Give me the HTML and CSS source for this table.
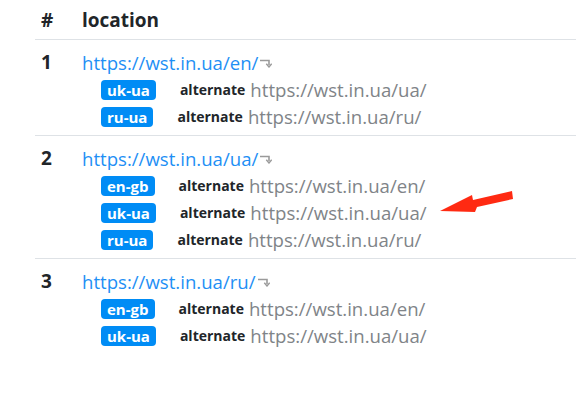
FILE: index.html
```html
<!DOCTYPE html>
<html>
<head>
<meta charset="utf-8">
<link rel="stylesheet" href="styles.css">
</head>
<body>
<div class="table">
  <div class="head">
    <div class="num">#</div>
    <div class="loc">location</div>
  </div>
  <div class="row">
    <div class="num">1</div>
    <div class="loc">
      <div class="main"><a class="link">https://wst.in.ua/en/</a><svg class="ret" width="12" height="10" viewBox="0 0 12 10"><path d="M0 2.5H9V7" fill="none" stroke="#9a9a9a" stroke-width="1.6"/><path d="M6.3 5.8L9 9L11.7 5.8" fill="none" stroke="#9a9a9a" stroke-width="1.4"/></svg></div>
      <div class="alt"><span class="badge">uk-ua</span><b class="rel">alternate</b><span class="url">https://wst.in.ua/ua/</span></div>
      <div class="alt"><span class="badge">ru-ua</span><b class="rel">alternate</b><span class="url">https://wst.in.ua/ru/</span></div>
    </div>
  </div>
  <div class="row">
    <div class="num">2</div>
    <div class="loc">
      <div class="main"><a class="link">https://wst.in.ua/ua/</a><svg class="ret" width="12" height="10" viewBox="0 0 12 10"><path d="M0 2.5H9V7" fill="none" stroke="#9a9a9a" stroke-width="1.6"/><path d="M6.3 5.8L9 9L11.7 5.8" fill="none" stroke="#9a9a9a" stroke-width="1.4"/></svg></div>
      <div class="alt"><span class="badge">en-gb</span><b class="rel">alternate</b><span class="url">https://wst.in.ua/en/</span></div>
      <div class="alt"><span class="badge">uk-ua</span><b class="rel">alternate</b><span class="url">https://wst.in.ua/ua/</span></div>
      <div class="alt"><span class="badge">ru-ua</span><b class="rel">alternate</b><span class="url">https://wst.in.ua/ru/</span></div>
    </div>
  </div>
  <div class="row last">
    <div class="num">3</div>
    <div class="loc">
      <div class="main"><a class="link">https://wst.in.ua/ru/</a><svg class="ret" width="12" height="10" viewBox="0 0 12 10"><path d="M0 2.5H9V7" fill="none" stroke="#9a9a9a" stroke-width="1.6"/><path d="M6.3 5.8L9 9L11.7 5.8" fill="none" stroke="#9a9a9a" stroke-width="1.4"/></svg></div>
      <div class="alt"><span class="badge">en-gb</span><b class="rel">alternate</b><span class="url">https://wst.in.ua/en/</span></div>
      <div class="alt"><span class="badge">uk-ua</span><b class="rel">alternate</b><span class="url">https://wst.in.ua/ua/</span></div>
    </div>
  </div>
</div>
<svg class="arrow" width="80" height="24" viewBox="0 0 80 24"><polygon points="72,0 73,8 37,16 35,21 0,20 32,4 33,9" fill="#ff2a12"/></svg>
</body>
</html>
```
FILE: styles.css
```css
html, body {
  margin: 0;
  padding: 0;
  background: #fff;
}
body {
  font-family: "Open Sans", "Noto Sans", sans-serif;
  color: #212529;
  position: relative;
  width: 576px;
  height: 409px;
  overflow: hidden;
}
.table {
  margin-left: 35px;
}
.head, .row {
  display: flex;
  border-bottom: 1px solid #dee2e6;
}
.row.last {
  border-bottom: none;
}
.head {
  height: 39px;
  align-items: center;
  font-weight: 700;
  font-size: 19px;
}
.num {
  width: 47px;
  padding-left: 6px;
  box-sizing: border-box;
  font-weight: 700;
  font-size: 19px;
  line-height: 28px;
}
.head .num, .head .loc {
  line-height: 28px;
}
.row {
  padding: 8px 0 5px;
}
.main {
  height: 28px;
  display: flex;
  align-items: center;
}
.link {
  color: #1e8ff5;
  font-size: 18.6px;
}
.ret {
  margin-left: 2px;
  margin-top: 2px;
}
.alt {
  height: 27px;
  display: flex;
  align-items: center;
  padding-left: 19px;
}
.badge {
  background: #008cf5;
  color: #fff;
  font-weight: 700;
  font-size: 15px;
  line-height: 20px;
  padding: 0 6px;
  border-radius: 4px;
}
.rel {
  margin-left: 24px;
  font-size: 14px;
  font-weight: 700;
  color: #212529;
}
.url {
  margin-left: 5px;
  font-size: 18.6px;
  color: #808488;
}
.arrow {
  position: absolute;
  left: 440px;
  top: 191px;
}
```
